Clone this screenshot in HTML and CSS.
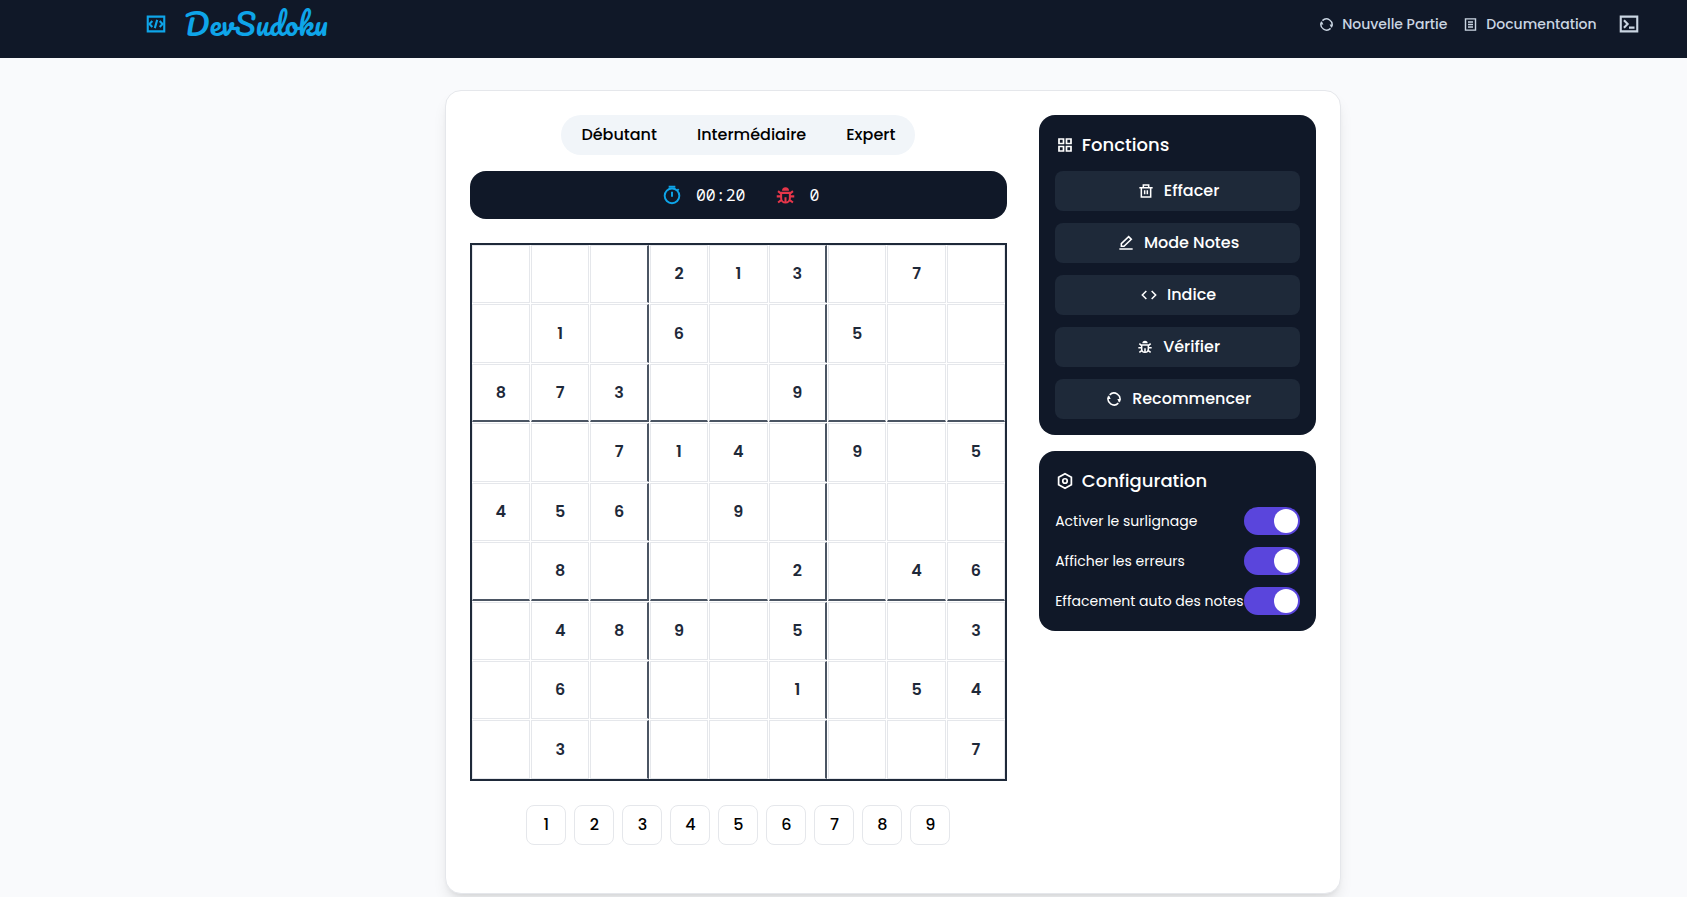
FILE: index.html
```html
<!DOCTYPE html>
<html lang="fr">
<head>
<meta charset="utf-8">
<title>DevSudoku</title>
<link rel="stylesheet" href="styles.css">
</head>
<body>
<svg class="defs" width="0" height="0">
  <symbol id="code-box" viewBox="0 0 24 24"><path d="M3 4h18v16H3z"/><path d="M8 8.800 4.900 12 8 15.200M16 8.800 19.100 12 16 15.200M13.300 7.500l-2.600 9"/></symbol>
  <symbol id="refresh" viewBox="0 0 24 24"><path d="M5.500 5.800A9 9 0 0 1 20 16M18.500 18.200A9 9 0 0 1 4 8"/><path class="solid" d="M17 12h5l-2.300 5.500zM7 12H2l2.300-5.500z"/></symbol>
  <symbol id="doc" viewBox="0 0 24 24"><path d="M4 3h16v18H4zM8 8h8M8 12h8M8 16h8"/></symbol>
  <symbol id="terminal" viewBox="0 0 24 24"><path d="M3 4h18v16H3zM6.500 8l4 4-4 4M12 16h6"/></symbol>
  <symbol id="timer" viewBox="0 0 24 24"><circle cx="12" cy="13" r="8.800"/><path d="M8 2h8M12 8v6M18 7l2-2"/></symbol>
  <symbol id="bug" viewBox="0 0 24 24"><path d="M7 9h10v6a5 5 0 0 1-10 0zM12 14v6M2 13H7M17 13h5M3.500 7l3.500 3M20.500 7 17 10M3.500 20 7.500 17M20.500 20l-4-3"/><path class="solid" d="M8 6.500a4 4 0 0 1 8 0z"/></symbol>
  <symbol id="grid" viewBox="0 0 24 24"><path d="M4 4h6v6H4zM14 4h6v6h-6zM4 14h6v6H4zM14 14h6v6h-6z"/></symbol>
  <symbol id="trash" viewBox="0 0 24 24"><path d="M2 7h20M5 7v14h14V7M8 7V3h8v4M10 11v6M14 11v6"/></symbol>
  <symbol id="pencil" viewBox="0 0 24 24"><path d="M2 21h20M5 17v-4L16 2.500l4 4L9 17z"/></symbol>
  <symbol id="code" viewBox="0 0 24 24"><path d="M8 6l-6 6 6 6M16 6l6 6-6 6"/></symbol>
  <symbol id="hex" viewBox="0 0 24 24"><path d="M12 2.200 20.500 7v10L12 21.800 3.500 17V7z"/><circle cx="12" cy="12" r="3"/></symbol>
</svg>

<header class="navbar">
  <div class="brand">
    <svg class="icon icon-lg"><use href="#code-box"/></svg>
    <span class="logo">DevSudoku</span>
  </div>
  <nav class="links">
    <a class="link link-new"><svg class="icon icon-sm"><use href="#refresh"/></svg><span>Nouvelle Partie</span></a>
    <a class="link link-docs"><svg class="icon icon-sm"><use href="#doc"/></svg><span>Documentation</span></a>
    <a class="link"><svg class="icon icon-lg"><use href="#terminal"/></svg></a>
  </nav>
</header>

<main class="card">
  <section class="game">
    <div class="levels"><button>Débutant</button><button>Intermédiaire</button><button>Expert</button></div>
    <div class="status">
      <svg class="icon icon-timer"><use href="#timer"/></svg><span class="time">00:20</span>
      <svg class="icon icon-bug"><use href="#bug"/></svg><span class="errors">0</span>
    </div>
    <div class="board" id="board"></div>
    <div class="pad"><button>1</button><button>2</button><button>3</button><button>4</button><button>5</button><button>6</button><button>7</button><button>8</button><button>9</button></div>
  </section>
  <aside class="side">
    <section class="panel">
      <h2><svg class="icon icon-title"><use href="#grid"/></svg><span>Fonctions</span></h2>
      <div class="actions">
        <button><svg class="icon icon-md"><use href="#trash"/></svg><span>Effacer</span></button>
        <button><svg class="icon icon-md"><use href="#pencil"/></svg><span>Mode Notes</span></button>
        <button><svg class="icon icon-md"><use href="#code"/></svg><span>Indice</span></button>
        <button><svg class="icon icon-md"><use href="#bug"/></svg><span>Vérifier</span></button>
        <button><svg class="icon icon-md"><use href="#refresh"/></svg><span>Recommencer</span></button>
      </div>
    </section>
    <section class="panel config">
      <h2><svg class="icon icon-title"><use href="#hex"/></svg><span>Configuration</span></h2>
      <div class="options">
        <label><span>Activer le surlignage</span><i class="toggle"></i></label>
        <label><span>Afficher les erreurs</span><i class="toggle"></i></label>
        <label><span>Effacement auto des notes</span><i class="toggle"></i></label>
      </div>
    </section>
  </aside>
</main>
<script src="board.js"></script>
</body>
</html>
```
FILE: styles.css
```css
* { box-sizing: border-box; }
body {
  margin: 0;
  height: 897px;
  overflow: hidden;
  background: #f9fafc;
  font-family: Poppins, Inter, "Open Sans", sans-serif;
  font-size: 16px;
  line-height: 24px;
}
button {
  font: inherit;
  font-weight: 500;
  border: 0;
  padding: 0;
  background: none;
  color: #000;
}
.defs { position: absolute; }
.icon {
  flex: none;
  fill: none;
  stroke: currentColor;
  stroke-width: 2.3;
}
.solid { fill: currentColor; stroke: none; }
.icon-sm { width: 15px; height: 15px; }
.icon-md { width: 16px; height: 16px; }
.icon-title { width: 18px; height: 18px; }
.icon-lg { width: 22px; height: 22px; }

.navbar {
  display: flex;
  justify-content: space-between;
  align-items: center;
  height: 58px;
  padding: 0 47.4px 10px 145.3px;
  background: #101828;
  color: #cad5e2;
}
.brand { display: flex; align-items: center; gap: 17px; color: #0ea5e9; }
.logo {
  font-family: Pacifico, cursive;
  font-size: 30px;
  line-height: 48px;
}
.links { display: flex; align-items: center; font-size: 14px; font-weight: 500; }
.link { display: flex; align-items: center; gap: 8px; }
.link-new { margin-right: 16px; }
.link-docs { margin-right: 21px; }

.card {
  display: flex;
  gap: 32px;
  width: 896.4px;
  height: 804px;
  margin: 32px 0 0 444.6px;
  padding: 24px;
  border: 1px solid #e5e7eb;
  border-radius: 16px;
  background: #fff;
  box-shadow: 0 10px 15px -3px rgba(0, 0, 0, .1), 0 4px 6px -4px rgba(0, 0, 0, .1);
}
.game { display: flex; flex-direction: column; align-items: center; width: 537.6px; }
.levels {
  display: flex;
  gap: 40px;
  height: 40px;
  width: 354px;
  justify-content: center;
  border-radius: 20px;
  background: #f1f5f9;
}
.status {
  display: flex;
  align-items: center;
  justify-content: center;
  width: 100%;
  height: 48px;
  margin: 16px 0 24px;
  padding-left: 4.5px;
  border-radius: 16px;
  background: #101828;
  color: #fff;
  font-family: Consolas, "Noto Sans Mono", monospace;
  font-size: 16.5px;
}
.icon-timer { width: 20px; height: 20px; margin-right: 14px; color: #0ea5e9; }
.icon-bug { width: 21px; height: 21px; margin: 0 13px 0 30px; color: #e7364a; }

.board {
  display: grid;
  grid-template-columns: repeat(9, 1fr);
  grid-template-rows: repeat(9, 1fr);
  gap: 1px;
  width: 537.6px;
  height: 537.8px;
  border: 2px solid #1e2939;
}
.cell {
  display: flex;
  align-items: center;
  justify-content: center;
  border: 1px solid #e5e7eb;
  color: #1e2939;
  font-weight: 600;
}
.edge-right { border-right: 2px solid #4b5563; }
.edge-bottom { border-bottom: 2px solid #4b5563; }

.pad { display: flex; gap: 8px; margin-top: 24.2px; }
.pad button { width: 40px; height: 40px; border: 1px solid #e5e7eb; border-radius: 8px; }

.side { display: flex; flex-direction: column; gap: 16px; width: 276.8px; }
.panel { padding: 16px; border-radius: 16px; background: #101828; color: #fff; }
.panel h2 {
  display: flex;
  align-items: center;
  gap: 8px;
  margin: 0 0 12px;
  font-size: 18px;
  font-weight: 500;
  line-height: 28px;
}
.panel h2 .icon { margin-left: 0.6px; }
.actions { display: flex; flex-direction: column; gap: 12px; }
.actions button {
  display: flex;
  align-items: center;
  justify-content: center;
  gap: 10px;
  height: 40px;
  padding-left: 2px;
  border-radius: 8px;
  background: #1e2939;
  color: #fff;
}
.options { display: flex; flex-direction: column; gap: 12px; }
.options label {
  display: flex;
  align-items: center;
  justify-content: space-between;
  height: 28px;
  font-size: 14px;
  white-space: nowrap;
}
.toggle {
  flex: none;
  display: flex;
  justify-content: flex-end;
  width: 56px;
  height: 28px;
  padding: 2px;
  border-radius: 14px;
  background: #5a45dc;
}
.toggle::after { content: ""; width: 24px; height: 24px; border-radius: 50%; background: #fff; }
```
FILE: board.js
```javascript
const rows = [
  "...213.7.",
  ".1.6..5..",
  "873..9...",
  "..714.9.5",
  "456.9....",
  ".8...2.46",
  ".489.5..3",
  ".6...1.54",
  ".3......7"
];
const board = document.getElementById("board");
rows.forEach((row, r) => {
  [...row].forEach((value, c) => {
    const cell = document.createElement("div");
    cell.className = "cell";
    if (c === 2 || c === 5) cell.classList.add("edge-right");
    if (r === 2 || r === 5) cell.classList.add("edge-bottom");
    if (value !== ".") cell.textContent = value;
    board.append(cell);
  });
});
```
